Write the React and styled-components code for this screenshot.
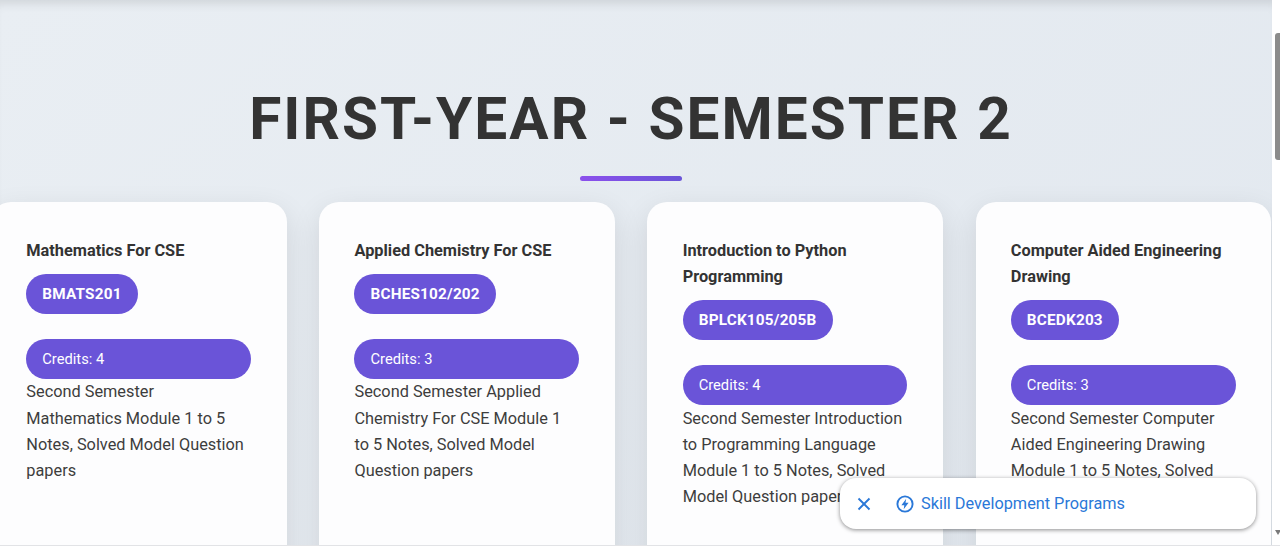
import React from 'react'
import styled, { createGlobalStyle } from 'styled-components'

const GlobalStyle = createGlobalStyle`
  html, body {
    margin: 0;
    height: 100%;
    overflow: hidden;
    background: #ffffff;
    font-family: Roboto, "Liberation Sans", sans-serif;
  }
`;

const Page = styled.div`
  display: flex;
  width: 1280px;
  height: 548px;
  overflow: hidden;
  position: relative;
`;

const Main = styled.main`
  width: 1272px;
  flex: none;
  height: 545px;
  overflow: hidden;
  position: relative;
  background: linear-gradient(135deg, #e9eef3 0%, #e2e8ef 100%);
  box-shadow: inset 0 10px 10px -6px rgba(0, 0, 0, 0.1);
`;

const Content = styled.div`
  width: 1280px;
  margin-left: -9px;
`;

const Title = styled.h1`
  margin: 0;
  padding-top: 86px;
  font-size: 58.5px;
  line-height: 67px;
  font-weight: 700;
  letter-spacing: 2.05px;
  color: #333333;
  text-align: center;
  text-transform: uppercase;
`;

const Underline = styled.div`
  width: 102px;
  height: 5px;
  margin: 23px auto 0;
  border-radius: 3px;
  background: linear-gradient(90deg, #8b50ec, #6a54d8);
`;

const CardRow = styled.div`
  display: flex;
  gap: 32.6px;
  margin-top: 21px;
`;

const Card = styled.article`
  flex: none;
  box-sizing: border-box;
  width: 295.6px;
  height: 420px;
  padding: 36px 35.6px 36px 35.3px;
  background: #fdfdfe;
  border-radius: 20px;
  box-shadow: 0 10px 30px rgba(0, 0, 0, 0.11);
`;

const CardTitle = styled.h3`
  margin: 0;
  font-size: 16.32px;
  line-height: 1.6;
  font-weight: 700;
  color: #333333;
`;

const Pill = styled.div`
  box-sizing: border-box;
  height: 40px;
  padding: 0 16px;
  border-radius: 20px;
  background: #6a54d8;
  color: #ffffff;
  font-size: 14.69px;
  line-height: 40px;
`;

const CodePill = styled(Pill)`
  display: table;
  margin-top: 10px;
  font-size: 15.3px;
  font-weight: 700;
  letter-spacing: 0.2px;
`;

const CreditPill = styled(Pill)`
  margin-top: 25px;
`;

const Description = styled.p`
  margin: 0.4px 0 0;
  font-size: 16.32px;
  line-height: 1.6;
  color: #3d3d3d;
`;

const Toast = styled.div`
  position: absolute;
  left: 840px;
  top: 478px;
  width: 416px;
  height: 51px;
  box-sizing: border-box;
  display: flex;
  align-items: center;
  padding-left: 17px;
  background: #ffffff;
  border-radius: 16px;
  box-shadow: 0 1px 4px rgba(0, 0, 0, 0.45);
  color: #2a78d8;
  font-size: 16.3px;
`;

const CloseIcon = styled.svg`
  width: 14px;
  height: 14px;
  margin-right: 25px;
`;

const BoltIcon = styled.svg`
  width: 18px;
  height: 18px;
  margin-right: 7px;
`;

const ScrollTrack = styled.div`
  flex: none;
  width: 8px;
  height: 545px;
  position: relative;
  background: #ffffff;
`;

const ScrollThumb = styled.div`
  position: absolute;
  left: 3px;
  top: 33px;
  width: 5px;
  height: 127px;
  border-radius: 3px 0 0 3px;
  background: #8b8b8b;
`;

const ScrollArrow = styled.div`
  position: absolute;
  left: 3px;
  top: 530px;
  border-left: 3px solid transparent;
  border-right: 3px solid transparent;
  border-top: 5px solid #7a7a7a;
`;

const BottomLine = styled.div`
  position: absolute;
  left: 0;
  right: 0;
  bottom: 0;
  height: 3px;
  background: #ffffff;
  border-top: 1px solid #e2e3e6;
  box-sizing: border-box;
`;

const subjects = [
  {
    title: 'Mathematics For CSE',
    code: 'BMATS201',
    credits: 4,
    text: 'Second Semester Mathematics Module 1 to 5 Notes, Solved Model Question papers',
  },
  {
    title: 'Applied Chemistry For CSE',
    code: 'BCHES102/202',
    credits: 3,
    text: 'Second Semester Applied Chemistry For CSE Module 1 to 5 Notes, Solved Model Question papers',
  },
  {
    title: 'Introduction to Python Programming',
    code: 'BPLCK105/205B',
    credits: 4,
    text: 'Second Semester Introduction to Programming Language Module 1 to 5 Notes, Solved Model Question papers',
  },
  {
    title: 'Computer Aided Engineering Drawing',
    code: 'BCEDK203',
    credits: 3,
    text: 'Second Semester Computer Aided Engineering Drawing Module 1 to 5 Notes, Solved Model Question papers',
  },
];

export default function App() {
  return (
    <Page>
      <GlobalStyle />
      <Main>
        <Content>
          <Title>First-Year - Semester 2</Title>
          <Underline />
          <CardRow>
            {subjects.map(s => (
              <Card key={s.code}>
                <CardTitle>{s.title}</CardTitle>
                <CodePill>{s.code}</CodePill>
                <CreditPill>Credits: {s.credits}</CreditPill>
                <Description>{s.text}</Description>
              </Card>
            ))}
          </CardRow>
        </Content>
      </Main>
      <ScrollTrack>
        <ScrollThumb />
        <ScrollArrow />
      </ScrollTrack>
      <BottomLine />
      <Toast>
        <CloseIcon viewBox="0 0 14 14" fill="none" stroke="currentColor" strokeWidth="1.9">
          <path d="M1.5 1.5l11 11M12.5 1.5l-11 11" />
        </CloseIcon>
        <BoltIcon viewBox="0 0 18 18" fill="none">
          <circle cx="9" cy="9" r="7.6" stroke="currentColor" strokeWidth="1.9" />
          <path d="M10.2 3.8L5.4 10.2h2.9l-.6 4 4.9-6.4H9.5z" fill="currentColor" />
        </BoltIcon>
        Skill Development Programs
      </Toast>
    </Page>
  )
}
